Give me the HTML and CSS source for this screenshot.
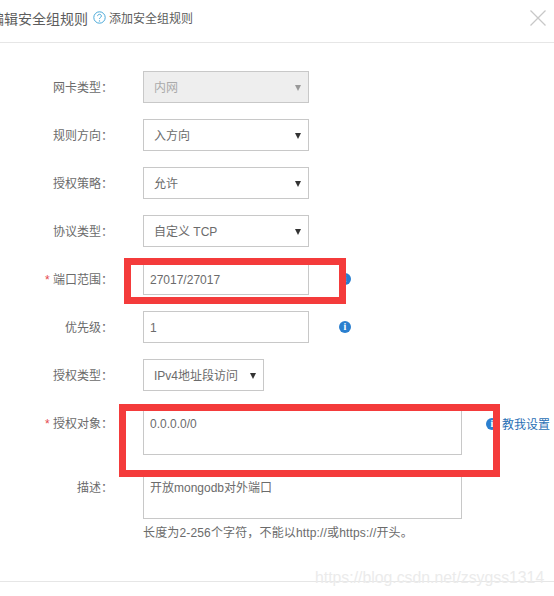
FILE: index.html
```html
<!DOCTYPE html>
<html lang="zh-CN">
  <head>
    <meta charset="UTF-8" />
    <title>编辑安全组规则</title>
    <link rel="stylesheet" href="styles.css">
  </head>
  <body>
    <div class="dialog">
      <div class="header">
        <h3 class="title">编辑安全组规则</h3>
        <svg class="help-icon" width="13" height="13" viewBox="0 0 13 13">
          <circle cx="6.5" cy="6.5" r="5.7" fill="none" stroke="#49a9d8" stroke-width="1" />
          <path d="M4.6 5.1c0-1.1.9-1.8 1.9-1.8s1.9.7 1.9 1.7c0 1.5-1.9 1.4-1.9 2.9" fill="none" stroke="#49a9d8" stroke-width="1" />
          <circle cx="6.5" cy="9.9" r=".7" fill="#49a9d8" />
        </svg>
        <span class="help-text">添加安全组规则</span>
        <svg class="close-icon" width="16" height="16" viewBox="0 0 16 16">
          <path d="M.5.5l15 15M15.5.5l-15 15" stroke="#c8c8c8" stroke-width="1.3" fill="none" />
        </svg>
      </div>

      <div class="form">
        <div class="row">
          <div class="label">网卡类型：</div>
          <div class="select disabled"><span>内网</span><i class="caret"></i></div>
        </div>
        <div class="row">
          <div class="label">规则方向：</div>
          <div class="select"><span>入方向</span><i class="caret"></i></div>
        </div>
        <div class="row">
          <div class="label">授权策略：</div>
          <div class="select"><span>允许</span><i class="caret"></i></div>
        </div>
        <div class="row">
          <div class="label">协议类型：</div>
          <div class="select"><span>自定义 TCP</span><i class="caret"></i></div>
        </div>
        <div class="row">
          <div class="label"><b class="req">*</b> 端口范围：</div>
          <div class="input">27017/27017</div>
          <i class="info">i</i>
        </div>
        <div class="row">
          <div class="label">优先级：</div>
          <div class="input">1</div>
          <i class="info">i</i>
        </div>
        <div class="row">
          <div class="label">授权类型：</div>
          <div class="select small"><span>IPv4地址段访问</span><i class="caret"></i></div>
        </div>
        <div class="row">
          <div class="label"><b class="req">*</b> 授权对象：</div>
          <div class="textarea">0.0.0.0/0</div>
          <i class="info wide">i</i>
          <a class="teach">教我设置</a>
        </div>
        <div class="row last">
          <div class="label">描述：</div>
          <div class="textarea">开放mongodb对外端口</div>
        </div>
        <div class="hint">长度为2-256个字符，不能以http://或https://开头。</div>
      </div>

      <div class="footer"></div>
    </div>

    <div class="mark mark-port"></div>
    <div class="mark mark-object"></div>
    <div class="watermark">https://blog.csdn.net/zsygss1314</div>
  </body>
</html>
```

FILE: styles.css
```css
html,
body {
  margin: 0;
  height: 596px;
  overflow: hidden;
  background: #fff;
}
body {
  position: relative;
  font-family: "Liberation Sans", "Noto Sans CJK SC", sans-serif;
  font-size: 12px;
  color: #6b6b6b;
}
.header {
  display: flex;
  align-items: center;
  height: 35px;
  padding: 0 8px 7px 0;
  border-bottom: 1px solid #e6e6e6;
}
.title {
  margin: 0 0 0 -10px;
  font-size: 14px;
  font-weight: normal;
  color: #5c5c5c;
}
.help-icon {
  margin-left: 5px;
}
.help-text {
  margin-left: 3px;
  color: #5c5c5c;
}
.close-icon {
  margin-left: auto;
}
.form {
  padding-top: 28px;
  height: 539px;
  box-sizing: border-box;
  border-bottom: 1px solid #e6e6e6;
}
.row {
  display: flex;
  align-items: flex-start;
  margin-bottom: 16px;
}
.row.last {
  margin-bottom: 6px;
}
.label {
  width: 113px;
  height: 32px;
  margin-right: 30px;
  text-align: right;
  line-height: 34px;
  white-space: nowrap;
}
.req {
  font-weight: normal;
  color: #e5484d;
}
.select,
.input,
.textarea {
  box-sizing: border-box;
  border: 1px solid #c8c8c8;
  width: 166px;
  height: 32px;
  line-height: 30px;
  background: #fff;
}
.select {
  display: flex;
  justify-content: space-between;
  align-items: center;
  padding: 1px 7px 0 10px;
}
.select.small {
  width: 121px;
}
.select.disabled {
  background: #eee;
  color: #aaa;
}
.caret {
  width: 0;
  height: 0;
  border-left: 3.5px solid transparent;
  border-right: 3.5px solid transparent;
  border-top: 6px solid #333;
}
.disabled .caret {
  border-top-color: #999;
}
.input {
  padding: 1px 6px 0;
}
.textarea {
  width: 319px;
  height: 48px;
  padding: 1px 6px 0;
}
.info {
  display: block;
  width: 12px;
  height: 12px;
  margin: 10px 0 0 30px;
  border-radius: 50%;
  background: #2a7fcf;
  color: #fff;
  font: bold 10px/12px "Liberation Serif", serif;
  text-align: center;
}
.info.wide {
  margin: 11px 0 0 24px;
}
.teach {
  margin: 9px 0 0 4px;
  line-height: 18px;
  color: #2a6fb5;
  white-space: nowrap;
}
.hint {
  margin-left: 143px;
  line-height: 16px;
  letter-spacing: .15px;
}
/* red marks painted on top of the screenshot */
.mark {
  position: absolute;
  box-sizing: border-box;
  border: 7px solid #f43b3b;
}
.mark-port {
  left: 124px;
  top: 258px;
  width: 222px;
  height: 46px;
}
.mark-object {
  left: 119px;
  top: 404px;
  width: 381px;
  height: 73px;
}
.watermark {
  position: absolute;
  left: 315px;
  top: 569px;
  font-family: "Liberation Sans", sans-serif;
  font-size: 15.8px;
  line-height: 18px;
  white-space: nowrap;
  color: #ebebeb;
}
```
